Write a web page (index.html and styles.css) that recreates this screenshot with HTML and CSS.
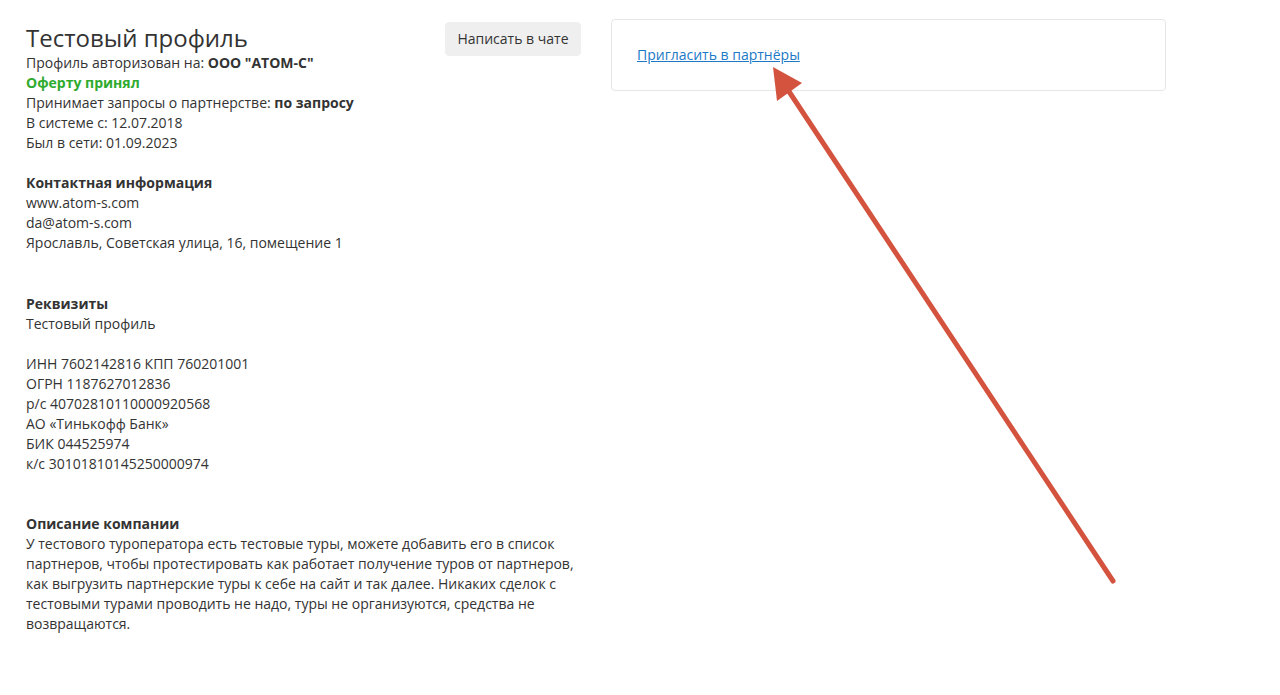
FILE: index.html
```html
<!DOCTYPE html>
<html lang="ru">
<head>
<meta charset="utf-8">
<title>Тестовый профиль</title>
<link rel="stylesheet" href="styles.css">
</head>
<body>
<div class="page">
  <div class="col-left">
    <div class="head">
      <div class="head-info">
        <h1 class="title">Тестовый профиль</h1>
        <div class="line">Профиль авторизован на: <b>ООО "АТОМ-С"</b></div>
        <div class="line green">Оферту принял</div>
        <div class="line">Принимает запросы о партнерстве: <b>по запросу</b></div>
        <div class="line">В системе с: 12.07.2018</div>
        <div class="line">Был в сети: 01.09.2023</div>
      </div>
      <button class="btn">Написать в чате</button>
    </div>

    <div class="section s-contacts">
      <div class="line"><b>Контактная информация</b></div>
      <div class="line">www.atom-s.com</div>
      <div class="line">da@atom-s.com</div>
      <div class="line">Ярославль, Советская улица, 16, помещение 1</div>
    </div>

    <div class="section s-req">
      <div class="line"><b>Реквизиты</b></div>
      <div class="line">Тестовый профиль</div>
      <div class="line blank"></div>
      <div class="line">ИНН 7602142816 КПП 760201001</div>
      <div class="line">ОГРН 1187627012836</div>
      <div class="line">р/с 40702810110000920568</div>
      <div class="line">АО «Тинькофф Банк»</div>
      <div class="line">БИК 044525974</div>
      <div class="line">к/с 30101810145250000974</div>
    </div>

    <div class="section s-desc">
      <div class="line"><b>Описание компании</b></div>
      <p class="desc">У тестового туроператора есть тестовые туры, можете добавить его в список партнеров, чтобы протестировать как работает получение туров от партнеров, как выгрузить партнерские туры к себе на сайт и так далее. Никаких сделок с тестовыми турами проводить не надо, туры не организуются, средства не возвращаются.</p>
    </div>
  </div>

  <div class="col-right">
    <div class="card">
      <a class="link" href="#">Пригласить в партнёры</a>
    </div>
  </div>
</div>

<svg class="arrow" width="1280" height="695" viewBox="0 0 1280 695" aria-hidden="true">
  <line x1="788" y1="90" x2="1113" y2="581" stroke="#d4533f" stroke-width="5" stroke-linecap="round"/>
  <polygon points="773,67 802,83 777,101" fill="#d4533f"/>
</svg>
</body>
</html>
```

FILE: styles.css
```css
html, body {
  margin: 0;
  padding: 0;
  background: #ffffff;
}

body {
  font-family: "Open Sans", "Liberation Sans", sans-serif;
  font-size: 14px;
  line-height: 20px;
  color: #333333;
}

.page {
  display: flex;
  gap: 30px;
  padding: 19px 0 0 26px;
}

.col-left {
  width: 555px;
  flex: none;
}

.col-right {
  width: 555px;
  flex: none;
}

.head {
  display: flex;
  justify-content: space-between;
  align-items: flex-start;
}

.head-info {
  flex: 1;
}

.title {
  margin: 3px 0 0 0;
  font-size: 24px;
  line-height: 31px;
  font-weight: 400;
  color: #333333;
}

.line {
  height: 20px;
  white-space: nowrap;
}

.line b {
  font-weight: 700;
  color: #333333;
}

.green {
  color: #2eab2e;
  font-weight: 700;
}

.btn {
  margin-top: 3px;
  height: 34px;
  padding: 0 11.5px;
  border: 1px solid #efefef;
  border-radius: 4px;
  background: #efefef;
  font-family: "Open Sans", "Liberation Sans", sans-serif;
  font-size: 14px;
  line-height: 20px;
  color: #333333;
  cursor: pointer;
}

.section {
  margin: 0;
}

.s-contacts {
  margin-top: 20px;
}

.s-req {
  margin-top: 41px;
}

.s-desc {
  margin-top: 40px;
}

.desc {
  margin: 0;
}

.card {
  border: 1px solid #e6e6e6;
  border-radius: 4px;
  padding: 25px 25px;
  line-height: 20px;
}

.link {
  color: #2079c7;
  text-decoration: underline;
}

.arrow {
  position: absolute;
  left: 0;
  top: 0;
  pointer-events: none;
}
```
